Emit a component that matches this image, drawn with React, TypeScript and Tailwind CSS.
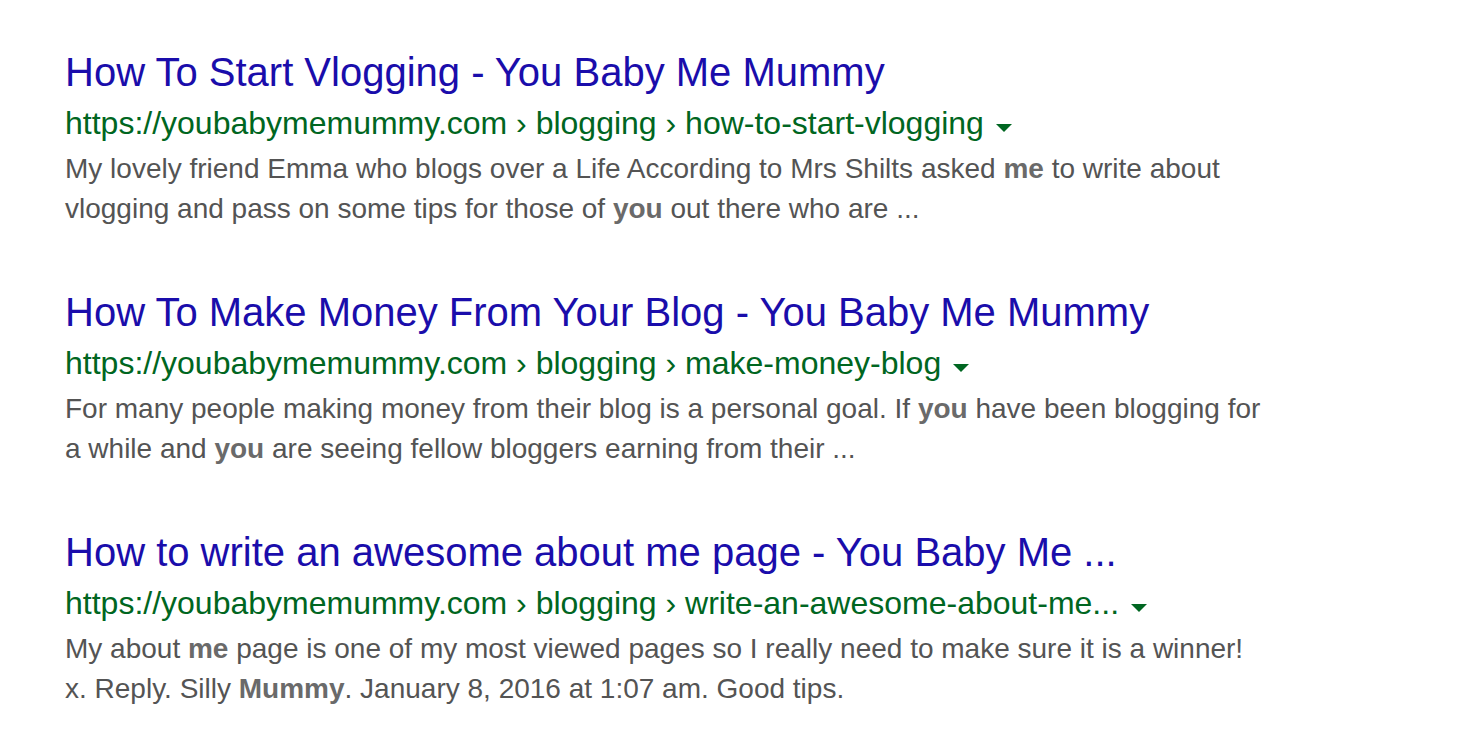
import React from "react";

type Part = { t: string; b?: boolean };

type Result = {
  title: string;
  crumbs: string[];
  lines: Part[][];
};

const results: Result[] = [
  {
    title: "How To Start Vlogging - You Baby Me Mummy",
    crumbs: ["https://youbabymemummy.com", "blogging", "how-to-start-vlogging"],
    lines: [
      [
        { t: "My lovely friend Emma who blogs over a Life According to Mrs Shilts asked " },
        { t: "me", b: true },
        { t: " to write about" },
      ],
      [
        { t: "vlogging and pass on some tips for those of " },
        { t: "you", b: true },
        { t: " out there who are ..." },
      ],
    ],
  },
  {
    title: "How To Make Money From Your Blog - You Baby Me Mummy",
    crumbs: ["https://youbabymemummy.com", "blogging", "make-money-blog"],
    lines: [
      [
        { t: "For many people making money from their blog is a personal goal. If " },
        { t: "you", b: true },
        { t: " have been blogging for" },
      ],
      [
        { t: "a while and " },
        { t: "you", b: true },
        { t: " are seeing fellow bloggers earning from their ..." },
      ],
    ],
  },
  {
    title: "How to write an awesome about me page - You Baby Me ...",
    crumbs: ["https://youbabymemummy.com", "blogging", "write-an-awesome-about-me..."],
    lines: [
      [
        { t: "My about " },
        { t: "me", b: true },
        { t: " page is one of my most viewed pages so I really need to make sure it is a winner!" },
      ],
      [
        { t: "x. Reply. Silly " },
        { t: "Mummy", b: true },
        { t: ". January 8, 2016 at 1:07 am. Good tips." },
      ],
    ],
  },
];

// Small dropdown arrow shown after the breadcrumb URL
function Caret() {
  return (
    <svg width="16" height="8" viewBox="0 0 16 8" className="ml-[12px] mt-[10px] shrink-0">
      <path d="M0 0 L16 0 L8 8 Z" fill="#006621" />
    </svg>
  );
}

function ResultItem({ r }: { r: Result }) {
  return (
    <div className="flex flex-col">
      <a className="text-[40px] leading-[48px] text-[#1a0dab] whitespace-nowrap cursor-pointer">
        {r.title}
      </a>
      <div className="mt-[5px] flex items-center h-[44px] text-[32px] leading-[44px] text-[#006621] whitespace-nowrap">
        <span>{r.crumbs.join(" › ")}</span>
        <Caret />
      </div>
      <div className="mt-[4px] text-[28px] leading-[40px] text-[#545454]">
        {r.lines.map((line, i) => (
          <div key={i} className="whitespace-nowrap">
            {line.map((p, j) =>
              p.b ? (
                <b key={j} className="font-bold text-[#6a6a6a]">
                  {p.t}
                </b>
              ) : (
                <span key={j}>{p.t}</span>
              )
            )}
          </div>
        ))}
      </div>
    </div>
  );
}

export default function App() {
  return (
    <div
      className="w-[1478px] h-[746px] bg-white overflow-hidden pl-[65px] pt-[48px] flex flex-col gap-[59px]"
      style={{ fontFamily: '"Liberation Sans", Arial, sans-serif' }}
    >
      {results.map((r, i) => (
        <ResultItem key={i} r={r} />
      ))}
    </div>
  );
}
